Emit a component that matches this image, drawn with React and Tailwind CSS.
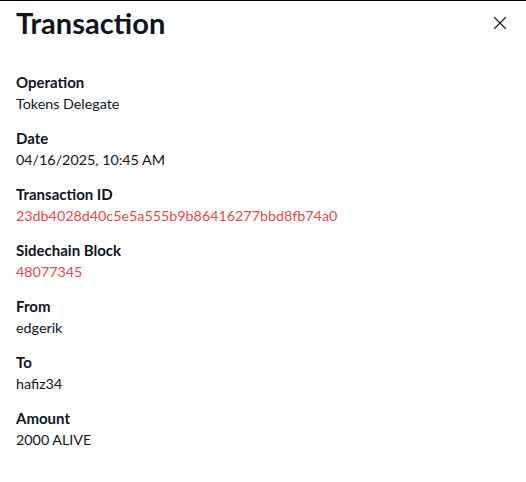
import { X } from 'lucide-react'

const rows = [
  { label: 'Operation', value: 'Tokens Delegate' },
  { label: 'Date', value: '04/16/2025, 10:45 AM' },
  { label: 'Transaction ID', value: '23db4028d40c5e5a555b9b86416277bbd8fb74a0', link: true },
  { label: 'Sidechain Block', value: '48077345', link: true },
  { label: 'From', value: 'edgerik' },
  { label: 'To', value: 'hafiz34' },
  { label: 'Amount', value: '2000 ALIVE' },
]

export default function App() {
  return (
    <div className="w-[526px] h-[482px] bg-white border-t border-black font-['Lato',sans-serif] text-[#0f1424]">
      <div className="flex items-center justify-between pl-4 pr-[15px] pt-[3px]">
        <h1 className="text-[29px] font-bold leading-[38px]">Transaction</h1>
        <button className="text-[#222]">
          <X size={22} strokeWidth={1.3} />
        </button>
      </div>
      <div className="flex flex-col gap-3 px-4 mt-[29px]">
        {rows.map((r) => (
          <div key={r.label} className="flex flex-col">
            <span className="text-[15px] font-bold leading-[22px]">{r.label}</span>
            <span className={`text-[14.3px] leading-[22px] ${r.link ? 'text-[#e5484d]' : ''}`}>{r.value}</span>
          </div>
        ))}
      </div>
    </div>
  )
}
